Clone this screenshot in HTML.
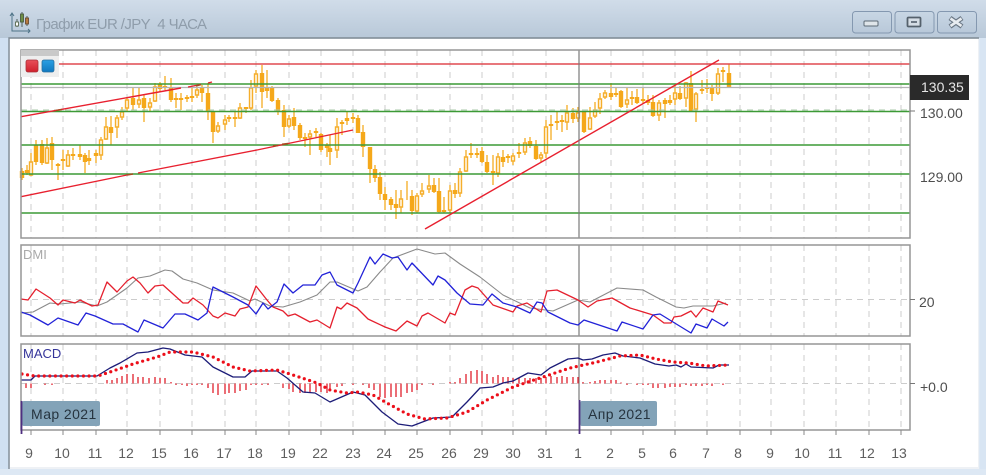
<!DOCTYPE html>
<html><head><meta charset="utf-8"><style>
html,body{margin:0;padding:0;width:986px;height:475px;overflow:hidden;background:#dde8f4}
svg{display:block;filter:blur(.3px)}
text{font-family:"Liberation Sans",sans-serif}
.t{font-size:14px;fill:#5e5e5e;text-anchor:middle}
.l{fill:none;stroke-linejoin:round}
</style></head><body>
<svg width="986" height="475" viewBox="0 0 986 475" xmlns="http://www.w3.org/2000/svg">
<defs><linearGradient id="tb" x1="0" y1="0" x2="0" y2="1"><stop offset="0" stop-color="#d0dce9"/><stop offset="1" stop-color="#b8c8d8"/></linearGradient>
<linearGradient id="bt" x1="0" y1="0" x2="0" y2="1"><stop offset="0" stop-color="#c8d6e4"/><stop offset="1" stop-color="#b8c8d9"/></linearGradient>
<linearGradient id="rd" x1="0" y1="0" x2="0" y2="1"><stop offset="0" stop-color="#e8505a"/><stop offset="1" stop-color="#d0202c"/></linearGradient>
<linearGradient id="bl" x1="0" y1="0" x2="0" y2="1"><stop offset="0" stop-color="#2ba0e4"/><stop offset="1" stop-color="#1078c0"/></linearGradient></defs>
<rect width="986" height="475" fill="#dde8f4"/>
<rect x="0" y="0" width="986" height="38" fill="url(#tb)"/>
<rect x="0" y="38" width="9" height="437" fill="#d0e0f2"/>
<rect x="980" y="38" width="6" height="437" fill="#d8e5f3"/>
<rect x="0" y="469" width="986" height="6" fill="#dde8f4"/>
<rect x="9" y="38" width="970" height="431" fill="#eef1f5"/>
<rect x="10" y="39" width="968" height="428" fill="#fff"/>
<path d="M9 469V38H979" fill="none" stroke="#7f8a94" stroke-width="1.4"/>
<!-- title icon -->
<path d="M12 13V31H30M10 16l2-3 2 3M28 29l2 2-2 2" fill="none" stroke="#4f7488" stroke-width="1"/>
<path d="M17 19v8M22 12v15M27 16v10" stroke="#4f5f5a" stroke-width="1"/>
<rect x="15.5" y="22" width="3" height="4" fill="#fff" stroke="#5a6a50" stroke-width=".9"/>
<rect x="20.5" y="14" width="3" height="8" fill="#6f8f45" stroke="#4b5b40" stroke-width=".9"/>
<rect x="25.5" y="18" width="3" height="6" fill="#b87a40" stroke="#6a4a30" stroke-width=".9"/>
<text x="36" y="29" font-size="15" fill="#8f9dab" textLength="171" lengthAdjust="spacing">График EUR /JPY&#160;&#160;4 ЧАСА</text>
<!-- window buttons -->
<g fill="url(#bt)" stroke="#8498b0"><rect x="852.5" y="11.5" width="39" height="21.5" rx="3"/><rect x="895" y="11.5" width="39" height="21.5" rx="3"/><rect x="937.5" y="11.5" width="39" height="21.5" rx="3"/></g>
<rect x="864" y="21" width="14" height="5" rx="1" fill="#dfe5ea" stroke="#5d6a76"/>
<rect x="907.5" y="17.5" width="13" height="9" rx="1" fill="#d5dde5" stroke="#55616c" stroke-width="1.8"/><rect x="911" y="21" width="6" height="2" fill="#6d7884"/>
<path d="M950 18l12 8.5M962 18l-12 8.5" stroke="#6a7784" stroke-width="5"/><path d="M950.5 18.5l11 7.5M961.5 18.5l-11 7.5" stroke="#e8ecf0" stroke-width="2.6"/>

<!-- grids -->
<g stroke="#cccccc" stroke-width="1" stroke-dasharray="6 5" fill="none">
<path d="M31 50V238M63 50V238M96 50V238M127 50V238M160 50V238M192 50V238M225 50V238M256 50V238M289 50V238M321 50V238M353 50V238M385 50V238M417 50V238M450 50V238M482 50V238M513 50V238M546 50V238M611 50V238M643 50V238M675 50V238M707 50V238M740 50V238M771 50V238M804 50V238M836 50V238M869 50V238M901 50V238"/>
<path d="M31 245V336M63 245V336M96 245V336M127 245V336M160 245V336M192 245V336M225 245V336M256 245V336M289 245V336M321 245V336M353 245V336M385 245V336M417 245V336M450 245V336M482 245V336M513 245V336M546 245V336M611 245V336M643 245V336M675 245V336M707 245V336M740 245V336M771 245V336M804 245V336M836 245V336M869 245V336M901 245V336"/>
<path d="M31 344V430M63 344V430M96 344V430M127 344V430M160 344V430M192 344V430M225 344V430M256 344V430M289 344V430M321 344V430M353 344V430M385 344V430M417 344V430M450 344V430M482 344V430M513 344V430M546 344V430M611 344V430M643 344V430M675 344V430M707 344V430M740 344V430M771 344V430M804 344V430M836 344V430M869 344V430M901 344V430"/>
<path d="M21 299.5H910M21 383.5H910"/>
</g>
<!-- candle wicks -->
<path stroke="#f5b232" stroke-width="1.4" fill="none" d="M22 168V180M27 165V175M31 153V176M36 140V165M42 140V165M47 138V164M52 137V170M58 163V180M63 150V170M68 150V167M73 148V160M80 145V160M85 153V173M89 150V165M96 150V163M101 137V160M106 117V140M111 116V145M117 115V138M122 107V120M127 97V112M133 88V110M139 87V108M144 95V122M150 98V112M155 83V102M160 82V92M165 76V90M171 78V102M176 93V108M181 93V110M187 95V102M192 88V102M197 88V98M202 85V102M208 83V120M213 112V143M218 122V133M225 115V130M229 115V122M235 112V127M240 103V119M246 107V113M251 80V110M256 70V93M262 65V108M267 70V98M272 86V102M278 98V115M284 105V137M289 115V128M294 108V130M300 123V140M305 133V147M310 130V155M316 128V137M321 133V152M327 143V157M330 135V165M337 118V158M342 120V135M347 112V125M353 113V123M358 115V133M363 125V157M370 147V183M375 165V182M380 172V200M385 187V210M391 197V210M396 190V219M401 190V213M407 181V200M412 190V215M417 193V213M422 183V197M429 175V193M434 178V193M439 178V213M444 197V213M450 185V213M455 183V198M460 168V197M466 150V172M471 143V158M477 148V158M482 147V163M487 155V173M493 155V185M498 153V177M503 150V167M508 154V163M513 153V165M519 143V158M525 138V155M530 137V148M536 140V160M541 152V162M546 120V158M551 115V140M557 111V130M562 115V132M567 105V130M573 108V123M578 107V122M584 111V133M590 107V130M595 102V118M600 93V114M605 90V99M611 83V100M616 88V97M621 90V108M627 88V108M632 91V105M637 89V104M643 88V103M648 95V105M653 95V117M659 100V121M665 98V118M670 95V105M675 85V105M680 86V100M686 82V107M691 71V111M696 92V122M702 80V94M707 79V93M712 85V101M718 68V95M723 67V82M729 64V87"/>
<!-- filled bodies -->
<path stroke="#f5a81a" stroke-width="4.4" fill="none" d="M22 171V178M27 170V173M36 145V162M42 144V163M52 143V160M58 164V166M63 159V161M73 154V156M80 154V157M85 155V162M89 158V161M96 153V156M111 127V133M133 98V105M144 98V108M160 84V89M165 86V88M171 88V100M176 98V100M181 98V100M187 97V99M192 96V98M202 87V93M208 93V112M213 112V132M229 117V119M235 117V119M246 107V109M262 73V92M267 88V91M272 87V101M278 100V112M284 110V127M294 117V126M300 125V138M305 137V139M316 131V133M321 134V150M327 145V148M330 148V152M342 122V124M347 118V121M353 117V119M358 118V133M363 132V147M370 147V169M375 169V178M380 177V194M385 194V200M391 199V205M396 204V208M412 196V211M434 185V192M439 191V212M444 210V212M455 190V194M471 153V155M477 153V155M482 151V162M487 162V172M493 171V173M503 157V162M508 156V158M519 152V154M530 141V146M536 146V159M551 124V126M557 121V123M562 120V122M573 113V119M584 112V132M611 93V97M616 93V95M621 91V107M632 97V99M637 97V103M643 99V101M648 100V103M653 102V116M665 100V104M670 100V103M680 93V99M691 83V111M702 89V91M707 87V89M712 88V94M723 70V72M729 73V87"/>
<!-- hollow bodies -->
<path fill="#fff6e6" stroke="#f5ae2c" stroke-width="1.4" d="M29.5 162h3v13h-3zM45.5 148h3v15h-3zM66.5 155h3v11h-3zM99.5 140h3v15h-3zM104.5 127h3v12h-3zM115.5 118h3v9h-3zM120.5 112h3v5h-3zM125.5 100h3v8h-3zM137.5 100h3v4h-3zM148.5 103h3v4h-3zM153.5 87h3v14h-3zM195.5 90h3v5h-3zM216.5 126h3v5h-3zM223.5 120h3v4h-3zM238.5 108h3v10h-3zM249.5 88h3v20h-3zM254.5 74h3v12h-3zM287.5 119h3v7h-3zM308.5 134h3v3h-3zM335.5 127h3v23h-3zM399.5 199h3v8h-3zM415.5 196h3v15h-3zM420.5 191h3v3h-3zM427.5 186h3v3h-3zM448.5 191h3v19h-3zM458.5 172h3v21h-3zM464.5 157h3v14h-3zM496.5 157h3v16h-3zM511.5 156h3v5h-3zM523.5 143h3v9h-3zM539.5 155h3v3h-3zM544.5 127h3v26h-3zM565.5 113h3v9h-3zM576.5 113h3v5h-3zM588.5 118h3v11h-3zM593.5 110h3v6h-3zM598.5 99h3v9h-3zM603.5 93h3v4h-3zM625.5 100h3v4h-3zM657.5 103h3v12h-3zM673.5 93h3v6h-3zM684.5 83h3v15h-3zM694.5 94h3v15h-3zM716.5 74h3v19h-3z"/>
<!-- horizontals -->
<path d="M21 87.5H910" stroke="#b4b4b4" stroke-width="1.2"/>
<path d="M21 110H910" stroke="#a9c9a9" stroke-width="1" stroke-dasharray="6 5"/>
<path d="M21 84H910M21 111.5H910M21 145H910M21 174H910M21 213H910" stroke="#3c9a36" stroke-width="1.5" fill="none"/>
<path d="M21 64H910" stroke="#e04a50" stroke-width="1.4"/>
<!-- trend lines -->
<g stroke="#e8202f" stroke-width="1.4" fill="none">
<path d="M21 116.7L181 88M188 87L201 84.5M208 83L212 82"/>
<path d="M21 196.7L127 175M138 173L257 150L353 130"/>
<path d="M425 229L719 60"/>
</g>
<path d="M56 110.5L62 109.5M127 175L133 174M273 146L278 145.4M282 144.3L288 143.5M196 86L201 84.5" stroke="#a84a20" stroke-width="1.6"/>
<!-- crosshair -->
<path d="M579 50V238M579 245V336M579 344V400" stroke="#7a7a7a" stroke-width="1.2"/>
<!-- DMI lines -->
<polyline class="l" stroke="#8a8a8a" stroke-width="1.1" points="21,313 33,312 50,303 60,304 80,302 97,306 107,302 117,295 127,288 138,278 150,276 165,270 172,271 183,279 197,283 213,290 233,293 250,301 255,299 270,306 283,307 300,302 317,295 330,282 337,282 358,291 367,287 380,272 393,258 417,249 435,254 445,253 460,264 480,277 503,295 530,308 553,311 578,300 590,302 617,288 643,290 656,297 676,307 684,308 693,306 713,306 726,303"/>
<polyline class="l" stroke="#e5202e" stroke-width="1.3" points="21,299 28,300 36,289 50,298 58,305 63,300 75,303 80,300 92,306 98,305 107,282 117,292 127,281 133,277 140,283 148,293 155,286 163,285 183,303 188,303 193,298 203,305 213,316 218,318 225,313 235,316 240,309 248,307 256,286 267,300 273,307 283,311 288,316 295,314 310,322 317,320 330,328 337,307 341,309 347,303 357,308 368,319 385,327 396,331 407,321 417,326 422,316 428,313 445,323 450,313 455,315 465,290 472,286 478,288 493,305 513,312 517,306 527,303 541,312 547,291 557,290 578,300 588,307 597,301 612,298 630,308 653,315 660,320 664,323 671,323 674,317 681,316 691,311 696,317 703,308 713,312 718,301 728,305"/>
<polyline class="l" stroke="#2222d8" stroke-width="1.3" points="21,312 30,315 48,325 58,318 78,325 86,313 95,316 113,324 123,324 138,332 144,320 163,328 175,314 185,314 198,320 207,313 213,287 233,297 248,305 256,314 263,303 268,309 277,302 284,284 293,293 303,285 315,285 322,275 330,272 337,285 353,293 358,283 370,257 375,264 383,254 392,258 398,257 407,270 412,263 433,285 438,276 445,280 457,293 470,304 483,305 492,294 503,303 517,307 530,313 537,302 542,303 548,312 570,323 578,325 584,320 617,331 622,322 643,329 653,315 660,314 673,322 691,333 696,324 707,328 712,319 724,326 728,322"/>
<!-- MACD histogram -->
<path stroke="#e0202c" stroke-width="1.3" fill="none" d="M26 383.5V388M31 383.5V388M45 383.5V385M52 383.5V385M107 383.5V380M112 383.5V380M117 383.5V378M122 383.5V376M127 383.5V374M133 383.5V374M138 383.5V377M143 383.5V377M149 383.5V378M155 383.5V377M160 383.5V378M165 383.5V378M171 383.5V382M176 383.5V385M182 383.5V385M187 383.5V386M192 383.5V385M197 383.5V385M202 383.5V385M208 383.5V388M213 383.5V393M218 383.5V395M225 383.5V394M229 383.5V393M235 383.5V393M240 383.5V391M246 383.5V390M251 383.5V385M256 383.5V385M262 383.5V385M268 383.5V385M283 383.5V388M289 383.5V389M293 383.5V392M300 383.5V393M305 383.5V393M310 383.5V393M316 383.5V392M321 383.5V392M327 383.5V393M330 383.5V390M337 383.5V387M342 383.5V386M353 383.5V385M363 383.5V385M369 383.5V388M374 383.5V390M380 383.5V397M385 383.5V398M391 383.5V397M396 383.5V397M401 383.5V397M407 383.5V393M412 383.5V392M417 383.5V390M422 383.5V385M433 383.5V385M450 383.5V382M455 383.5V382M460 383.5V378M466 383.5V374M471 383.5V371M477 383.5V370M482 383.5V371M487 383.5V374M493 383.5V377M498 383.5V375M503 383.5V377M508 383.5V377M513 383.5V378M519 383.5V378M525 383.5V378M530 383.5V378M536 383.5V378M541 383.5V378M546 383.5V377M551 383.5V376M557 383.5V377M562 383.5V376M567 383.5V377M573 383.5V377M578 383.5V377M583 383.5V382M590 383.5V382M595 383.5V381M600 383.5V380M605 383.5V380M611 383.5V380M616 383.5V380M621 383.5V382.5M627 383.5V385M637 383.5V385M643 383.5V385M648 383.5V385M653 383.5V388M658 383.5V388M665 383.5V388M670 383.5V387M675 383.5V387M680 383.5V387M686 383.5V385M691 383.5V386M696 383.5V386M702 383.5V386M707 383.5V385M712 383.5V386M723 383.5V385"/>
<!-- MACD line -->
<polyline class="l" stroke="#1c1c78" stroke-width="1.3" points="21,380 31,380 35,376 97,376 110,368 120,363 137,353 148,352 163,348 170,349 185,355 202,357 213,367 233,377 245,377 252,371 277,371 287,378 303,392 315,393 330,402 353,392 365,395 382,412 398,424 412,426 433,418 452,417 467,402 480,388 493,387 503,383 513,381 528,373 541,375 550,368 568,359 578,358 583,360 592,359 603,355 615,353 623,356 640,358 655,364 669,366 676,365 681,367 686,364 691,367 713,368 719,365 729,365"/>
<!-- signal dots -->
<polyline fill="none" stroke="#ec0f1a" stroke-width="3.2" stroke-linecap="round" stroke-dasharray="0 5.6" points="22,374 35,376 98,376 113,371 133,364 157,357 170,352 193,352 213,357 233,367 250,371 277,370 293,375 317,383 330,390 347,393 358,392 373,395 387,403 407,414 425,419 447,418 467,412 487,400 513,387 543,377 570,368 597,362 620,356 640,355 656,359 673,362 689,363 706,366 729,365"/>
<!-- frames -->
<g fill="none" stroke="#959595" stroke-width="1.5"><rect x="21" y="50" width="889" height="188"/><rect x="21" y="245" width="889" height="91"/><rect x="21" y="344" width="889" height="86"/></g>
<path d="M910 111H915M910 299.5H915M910 383.5H915" stroke="#777" stroke-width="1"/>
<path stroke="#888" stroke-width="1" d="M31 430v5M63 430v5M96 430v5M127 430v5M160 430v5M192 430v5M225 430v5M256 430v5M289 430v5M321 430v5M353 430v5M385 430v5M417 430v5M450 430v5M482 430v5M513 430v5M546 430v5M611 430v5M643 430v5M675 430v5M707 430v5M740 430v5M771 430v5M804 430v5M836 430v5M869 430v5M901 430v5"/>
<!-- legend box -->
<rect x="21" y="50" width="38" height="27" fill="#eeeeee"/><rect x="21" y="50" width="38" height="6" fill="#c9c9c9"/>
<rect x="26" y="60" width="12" height="12" rx="2" fill="url(#rd)" stroke="#a83038" stroke-width=".8"/>
<rect x="42" y="60" width="12" height="12" rx="2" fill="url(#bl)" stroke="#2a70a0" stroke-width=".8"/>
<text x="23" y="259" font-size="13" fill="#a8a8a8">DMI</text>
<text x="23" y="358" font-size="13" fill="#35359a">MACD</text>
<!-- month labels -->
<rect x="22" y="401" width="78" height="25" rx="2" fill="#83a3b8"/>
<rect x="580" y="401" width="77" height="25" rx="2" fill="#83a3b8"/>
<path d="M21.5 401V434M579.5 400V434" stroke="#4f2f80" stroke-width="1.8"/>
<text x="31" y="419" font-size="14" fill="#26343f" letter-spacing=".4">Мар 2021</text>
<text x="588" y="419" font-size="14" fill="#26343f" letter-spacing=".4">Апр 2021</text>
<!-- price labels -->
<rect x="910" y="75" width="59" height="25" fill="#2a2a2a"/>
<text x="921" y="92" font-size="14" fill="#e6e6e6">130.35</text>
<text x="920" y="118" font-size="14" fill="#4e4e4e">130.00</text>
<text x="920" y="182" font-size="14" fill="#4e4e4e">129.00</text>
<text x="919" y="307" font-size="14" fill="#4e4e4e">20</text>
<text x="920" y="392" font-size="14" fill="#4e4e4e">+0.0</text>
<!-- x labels -->
<g>
<text class="t" x="29" y="458">9</text><text class="t" x="62" y="458">10</text><text class="t" x="95" y="458">11</text><text class="t" x="126" y="458">12</text><text class="t" x="159" y="458">15</text><text class="t" x="191" y="458">16</text><text class="t" x="224" y="458">17</text><text class="t" x="255" y="458">18</text><text class="t" x="288" y="458">19</text><text class="t" x="320" y="458">22</text><text class="t" x="353" y="458">23</text><text class="t" x="384" y="458">24</text><text class="t" x="416" y="458">25</text><text class="t" x="449" y="458">26</text><text class="t" x="481" y="458">29</text><text class="t" x="513" y="458">30</text><text class="t" x="545" y="458">31</text><text class="t" x="578" y="458">1</text><text class="t" x="610" y="458">2</text><text class="t" x="642" y="458">5</text><text class="t" x="673" y="458">6</text><text class="t" x="706" y="458">7</text><text class="t" x="738" y="458">8</text><text class="t" x="770" y="458">9</text><text class="t" x="802" y="458">10</text><text class="t" x="835" y="458">11</text><text class="t" x="867" y="458">12</text><text class="t" x="899" y="458">13</text>
</g>
</svg>
</body></html>
